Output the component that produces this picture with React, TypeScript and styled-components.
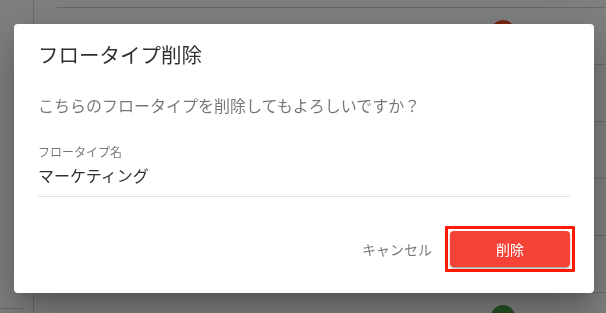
import React from 'react'
import styled, { createGlobalStyle } from 'styled-components'

const FONT = `Roboto, "Noto Sans CJK JP", "Noto Sans", sans-serif`

const GlobalStyle = createGlobalStyle`
  html, body {
    margin: 0;
    padding: 0;
    width: 606px;
    height: 313px;
    overflow: hidden;
    background: #ffffff;
  }
  * {
    box-sizing: border-box;
  }
`

const Page = styled.div`
  display: flex;
  width: 606px;
  height: 313px;
  overflow: hidden;
  font-family: ${FONT};
`

const Sidebar = styled.aside`
  width: 34px;
  flex-shrink: 0;
  border-right: 1px solid #d4d4d4;
  display: flex;
  flex-direction: column;
  justify-content: flex-end;
  padding-bottom: 4px;
`

const SideItem = styled.div`
  height: 1px;
  width: 24px;
  background: #d4d4d4;
`

const Main = styled.main`
  flex: 1;
  display: flex;
  flex-direction: column;
  padding-left: 23px;
`

const Header = styled.div`
  height: 8px;
  flex-shrink: 0;
  border-bottom: 1px solid #d4d4d4;
`

const Row = styled.div`
  height: 57px;
  flex-shrink: 0;
  display: flex;
  align-items: flex-start;
  justify-content: flex-end;
  padding: 12px 91px 0 0;
  border-bottom: 1px solid #d4d4d4;
`

const Avatar = styled.div<{ $color: string }>`
  width: 24px;
  height: 24px;
  border-radius: 50%;
  background: ${({ $color }) => $color};
`

const Backdrop = styled.div`
  position: fixed;
  inset: 0;
  background: rgba(0, 0, 0, 0.5);
  display: flex;
  align-items: flex-start;
  padding: 24px 0 0 14px;
`

const Dialog = styled.div`
  width: 580px;
  height: 269px;
  background: #ffffff;
  border-radius: 4px;
  box-shadow: 0 11px 15px -7px rgba(0, 0, 0, 0.2),
    0 24px 38px 3px rgba(0, 0, 0, 0.14), 0 9px 46px 8px rgba(0, 0, 0, 0.12);
  display: flex;
  flex-direction: column;
  font-family: ${FONT};
`

const Title = styled.h2`
  margin: 0;
  padding: 16px 24px 0;
  font-size: 20.5px;
  line-height: 32px;
  font-weight: 400;
  color: rgba(0, 0, 0, 0.82);
`

const Content = styled.div`
  padding: 23px 24px 0;
  display: flex;
  flex-direction: column;
`

const Message = styled.p`
  margin: 0;
  font-size: 16px;
  line-height: 24px;
  color: rgba(0, 0, 0, 0.54);
`

const Field = styled.div`
  margin-top: 26px;
  display: flex;
  flex-direction: column;
`

const Label = styled.label`
  font-size: 12px;
  line-height: 16px;
  color: rgba(0, 0, 0, 0.54);
`

const Value = styled.div`
  margin-top: 4px;
  padding-bottom: 7px;
  font-size: 16px;
  line-height: 24px;
  color: rgba(0, 0, 0, 0.82);
  border-bottom: 1px solid #e2e2e2;
`

const Actions = styled.div`
  margin-top: 29px;
  padding: 0 19px 0 24px;
  display: flex;
  justify-content: flex-end;
  align-items: center;
  gap: 5px;
`

const TextButton = styled.button`
  height: 36px;
  padding: 0 8px;
  border: none;
  background: transparent;
  font-family: ${FONT};
  font-size: 14px;
  color: rgba(0, 0, 0, 0.54);
  cursor: pointer;
`

const FocusRing = styled.span`
  display: inline-flex;
  padding: 2px;
  border: 3px solid #ff1a00;
  border-radius: 1px;
`

const DangerButton = styled.button`
  width: 120px;
  height: 36px;
  border: none;
  border-radius: 4px;
  background: #f44336;
  color: #ffffff;
  font-family: ${FONT};
  font-size: 14px;
  box-shadow: 0 3px 1px -2px rgba(0, 0, 0, 0.2), 0 2px 2px 0 rgba(0, 0, 0, 0.14),
    0 1px 5px 0 rgba(0, 0, 0, 0.12);
  cursor: pointer;
`

const AVATARS = ['#f4511e', '', '', '', '', '#43a047']

const App = () => {
  return (
    <>
      <GlobalStyle />
      <Page>
        <Sidebar>
          <SideItem />
        </Sidebar>
        <Main>
          <Header />
          {AVATARS.map((color, i) => (
            <Row key={i}>{color && <Avatar $color={color} />}</Row>
          ))}
        </Main>
      </Page>
      <Backdrop>
        <Dialog role="dialog">
          <Title>フロータイプ削除</Title>
          <Content>
            <Message>こちらのフロータイプを削除してもよろしいですか？</Message>
            <Field>
              <Label>フロータイプ名</Label>
              <Value>マーケティング</Value>
            </Field>
          </Content>
          <Actions>
            <TextButton>キャンセル</TextButton>
            <FocusRing>
              <DangerButton>削除</DangerButton>
            </FocusRing>
          </Actions>
        </Dialog>
      </Backdrop>
    </>
  )
}

export default App
